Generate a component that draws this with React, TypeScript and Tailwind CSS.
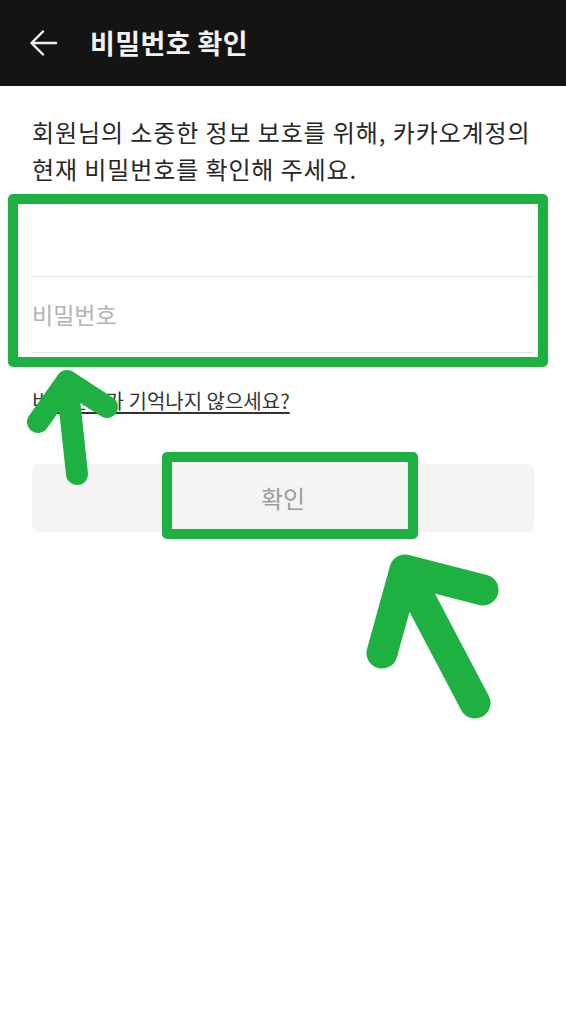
const font = { fontFamily: '"Noto Sans CJK KR", "Noto Sans", sans-serif' };

function BackArrow() {
  return (
    <svg width="28" height="28" viewBox="0 0 28 28" fill="none" className="text-[#eeeeee]">
      <path d="M26 14 H2 M13 2.5 L1.5 14 L13 25.5" stroke="currentColor" strokeWidth="2.4" strokeLinecap="round" strokeLinejoin="round" />
    </svg>
  );
}

function Annotations() {
  return (
    <div className="pointer-events-none absolute inset-0">
      <div className="absolute left-[8px] top-[194px] h-[173px] w-[540px] rounded-[5px] border-[10px] border-[#1eb142]" />
      <div className="absolute left-[162px] top-[452px] h-[87px] w-[256px] rounded-[5px] border-[10px] border-[#1eb142]" />
      <svg className="absolute left-0 top-0" width="566" height="1024" viewBox="0 0 566 1024" fill="none">
        <g stroke="#1eb142" strokeLinecap="round" strokeLinejoin="round">
          <path d="M38 422 L67 381 L107 407 M67 381 L77 474" strokeWidth="22" />
          <path d="M382 653 L405 570 L483 590 M405 570 L475 703" strokeWidth="31" />
        </g>
      </svg>
    </div>
  );
}

export default function App() {
  return (
    <div className="relative min-h-[1024px] w-full bg-white" style={font}>
      <header className="flex h-[86px] items-center bg-[#141414] pl-[30px]">
        <BackArrow />
        <h1 className="ml-[32px] text-[27px] font-bold tracking-[0.4px] text-[#f2f2f2]">비밀번호 확인</h1>
      </header>

      <main className="px-8 pt-[27px]">
        <p className="text-[24px] leading-[37px] tracking-[0.9px] text-[#262626]">
          회원님의 소중한 정보 보호를 위해, 카카오계정의
          <br />
          현재 비밀번호를 확인해 주세요.
        </p>

        <div className="mt-[2px]">
          <div className="h-[88px] border-b border-[#e3e3e3]" />
          <div className="flex h-[76px] items-center border-b border-[#e3e3e3]">
            <span className="text-[23px] text-[#b3b3b3]">비밀번호</span>
          </div>
        </div>

        <a className="mt-[35px] block text-[20px] leading-[26px] text-[#333333] underline underline-offset-[3px]">
          비밀번호가 기억나지 않으세요?
        </a>

        <button className="mt-[50px] flex h-[68px] w-full items-center justify-center rounded-md bg-[#f4f4f4] text-[24px] text-[#9c9c9c]">
          확인
        </button>
      </main>

      <Annotations />
    </div>
  );
}
